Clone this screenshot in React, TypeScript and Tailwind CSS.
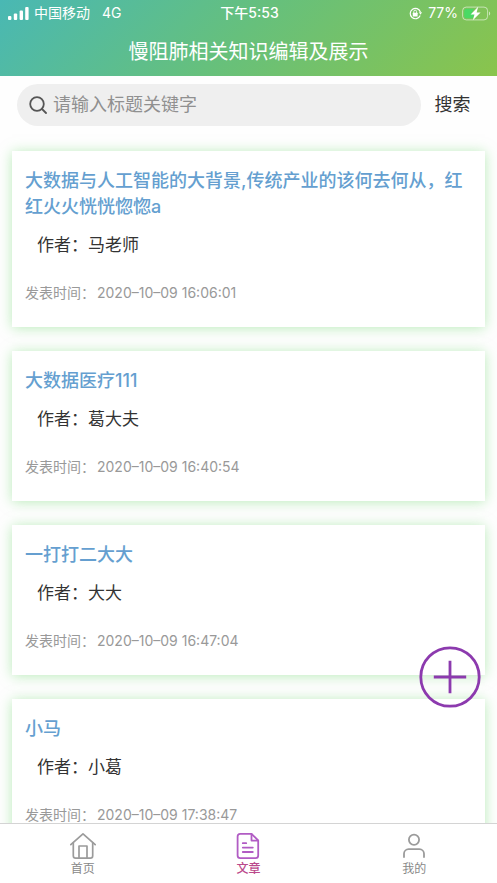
import React from "react";

type Article = { title: string; author: string; time: string };

const articles: Article[] = [
  {
    title: "大数据与人工智能的大背景,传统产业的该何去何从，红红火火恍恍惚惚a",
    author: "马老师",
    time: "2020–10–09 16:06:01",
  },
  { title: "大数据医疗111", author: "葛大夫", time: "2020–10–09 16:40:54" },
  { title: "一打打二大大", author: "大大", time: "2020–10–09 16:47:04" },
  { title: "小马", author: "小葛", time: "2020–10–09 17:38:47" },
];

function StatusBar() {
  return (
    <div className="grid h-[26px] grid-cols-3 items-center pr-[6px] pl-2 text-[14px] leading-5">
      <div className="flex items-center whitespace-nowrap">
        <svg width="21" height="13" viewBox="0 0 21 13" fill="currentColor" aria-hidden="true">
          <rect x="0" y="9" width="3.4" height="4" rx="1" />
          <rect x="5.8" y="6.5" width="3.4" height="6.5" rx="1" />
          <rect x="11.6" y="3.5" width="3.4" height="9.5" rx="1" />
          <rect x="17.2" y="0" width="3.4" height="13" rx="1" />
        </svg>
        <span className="ml-[5px]">中国移动</span>
        <span className="ml-3">4G</span>
      </div>
      <div className="text-center font-medium">下午5:53</div>
      <div className="flex items-center justify-end whitespace-nowrap">
        <svg width="13" height="13" viewBox="0 0 13 13" fill="none" stroke="currentColor" aria-hidden="true">
          <path d="M11.2 8.6A5.2 5.2 0 1 1 11.4 5" strokeWidth="1.2" />
          <path d="M9.9 5.2h3.1l-1.5 2.6z" fill="currentColor" stroke="none" />
          <rect x="3.8" y="5.8" width="4.8" height="3.6" rx="0.5" fill="currentColor" stroke="none" />
          <path d="M4.8 6V4.6a1.4 1.4 0 0 1 2.8 0V6" strokeWidth="0.9" />
        </svg>
        <span className="ml-[6px]">77%</span>
        <svg className="ml-1" width="29" height="15" viewBox="0 0 29 15" aria-hidden="true">
          <rect x="0.6" y="1.1" width="25" height="12.8" rx="3.6" fill="none" stroke="#fff" strokeOpacity="0.55" />
          <path d="M4.5 2.7H12L9.5 8h3l-1.5 4.3H4.5a2.3 2.3 0 0 1-2.3-2.3V5a2.3 2.3 0 0 1 2.3-2.3z" fill="#4bd964" />
          <path d="M16.2 0.8 8.6 8.4h3.9l-1.7 5.8 7.8-7.8h-4z" fill="#fff" />
          <path d="M27 5.5c1.6.6 1.6 3.4 0 4z" fill="#fff" fillOpacity="0.6" />
        </svg>
      </div>
    </div>
  );
}

function ArticleCard({ title, author, time }: Article) {
  return (
    <article className="bg-white px-[13px] pt-[17px] pb-6 shadow-[0_1px_12px_rgba(130,220,130,0.55)]">
      <h2 className="text-[18px] leading-[26px] font-medium text-[#659fd0]">{title}</h2>
      <p className="mt-3 pl-3 text-[17px] leading-[26px] text-[#333]">作者：{author}</p>
      <p className="mt-[25px] text-[14px] leading-5 text-[#999]">
        发表时间：<time className="ml-0.5">{time}</time>
      </p>
    </article>
  );
}

function HomeIcon() {
  return (
    <svg width="28" height="28" viewBox="0 0 28 28" fill="none" stroke="#9b9b9b" strokeWidth="1.7" strokeLinecap="round" strokeLinejoin="round" aria-hidden="true">
      <path d="M1.8 12.6 14 1.8l12.2 10.8" />
      <path d="M4.3 10.6v13.2a2.4 2.4 0 0 0 2.4 2.4h14.6a2.4 2.4 0 0 0 2.4-2.4V10.6" />
      <path d="M10 26V14h8v12" />
    </svg>
  );
}

function ArticleIcon() {
  return (
    <svg width="28" height="28" viewBox="0 0 28 28" fill="none" stroke="#b15cc4" strokeWidth="1.8" strokeLinecap="round" strokeLinejoin="round" aria-hidden="true">
      <path d="M17.5 1.8H6.2a2.6 2.6 0 0 0-2.6 2.6v19.2a2.6 2.6 0 0 0 2.6 2.6h15.4a2.6 2.6 0 0 0 2.6-2.6V8.5z" />
      <path d="M17.5 2v6.6H24" />
      <path d="M8.8 11.2h3.4M8.8 15.6h10M8.8 20h10" />
    </svg>
  );
}

function UserIcon() {
  return (
    <svg width="28" height="28" viewBox="0 0 28 28" fill="none" stroke="#9b9b9b" strokeWidth="1.8" strokeLinecap="round" aria-hidden="true">
      <circle cx="14" cy="7.7" r="5.1" />
      <path d="M4 25v-3.2a4.6 4.6 0 0 1 4.6-4.6h10.8a4.6 4.6 0 0 1 4.6 4.6V25" />
    </svg>
  );
}

const tabs = [
  { label: "首页", icon: <HomeIcon />, active: false },
  { label: "文章", icon: <ArticleIcon />, active: true },
  { label: "我的", icon: <UserIcon />, active: false },
];

export default function App() {
  return (
    <div className="flex h-screen flex-col overflow-hidden bg-[#fefefe] font-['Inter','Noto_Sans_CJK_SC',sans-serif]">
      <header className="h-[76px] shrink-0 bg-[linear-gradient(135deg,#49b8b4_0%,#66c07c_48%,#8ac44c_100%)] text-white">
        <StatusBar />
        <h1 className="text-center text-[20px] leading-[52px] font-normal">慢阻肺相关知识编辑及展示</h1>
      </header>

      <form className="flex shrink-0 items-center pt-2 pl-[17px]" onSubmit={(e) => e.preventDefault()}>
        <label className="flex h-[42px] min-w-0 flex-1 items-center rounded-full bg-[#efefef] pl-3">
          <svg width="18" height="18" viewBox="0 0 18 18" fill="none" stroke="#555" strokeWidth="1.8" strokeLinecap="round" aria-hidden="true">
            <circle cx="8" cy="8" r="6.8" />
            <path d="m13 13 4 4" />
          </svg>
          <input
            type="text"
            aria-label="搜索文章"
            placeholder="请输入标题关键字"
            className="ml-[6px] min-w-0 flex-1 bg-transparent text-[18px] leading-[26px] outline-none placeholder:text-[#909090]"
          />
        </label>
        <button type="submit" className="w-[76px] pr-[13px] text-center text-[18px] leading-[26px] text-[#333]">
          搜索
        </button>
      </form>

      <div className="relative min-h-0 flex-1">
        <main className="flex h-full flex-col gap-6 overflow-hidden px-3 pt-[25px]">
          {articles.map((a) => (
            <ArticleCard key={a.time} {...a} />
          ))}
        </main>
        <button
          type="button"
          aria-label="新增文章"
          className="absolute right-4 bottom-[115px] rounded-full"
        >
          <svg width="62" height="62" viewBox="0 0 62 62" fill="none" stroke="#8c3aae" strokeWidth="2.8" aria-hidden="true">
            <circle cx="31" cy="31" r="29.2" />
            <path d="M31 14.8v32.4M14.8 31h32.4" />
          </svg>
        </button>
      </div>

      <nav className="grid h-[60px] shrink-0 grid-cols-3 border-t border-[#d4d4d4] bg-white">
        {tabs.map((t) => (
          <a key={t.label} href="#" className="flex flex-col items-center pt-2" aria-current={t.active ? "page" : undefined}>
            {t.icon}
            <span className={t.active ? "text-[12px] leading-[18px] font-medium text-[#bb4a8c]" : "text-[12px] leading-[18px] text-[#888]"}>
              {t.label}
            </span>
          </a>
        ))}
      </nav>
    </div>
  );
}
